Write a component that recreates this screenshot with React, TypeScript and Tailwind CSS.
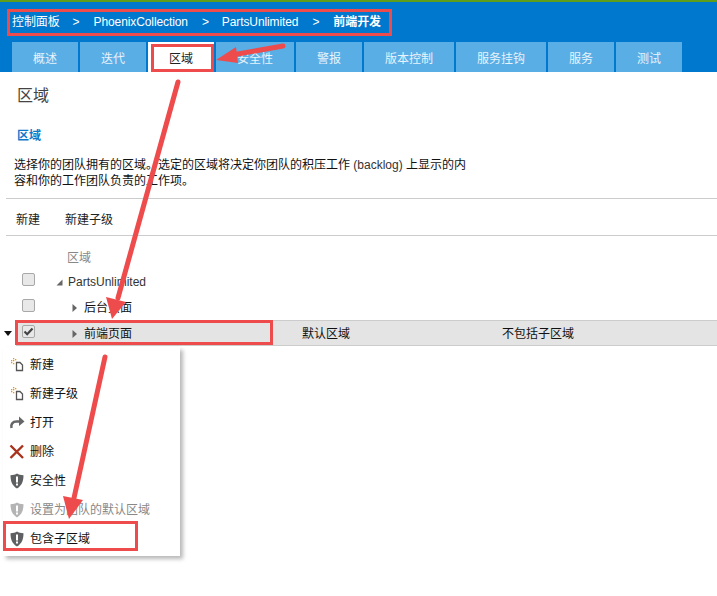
import React from "react";

const cjk = "font-['Liberation_Sans','Noto_Sans_CJK_SC',sans-serif]";

const tabs = [
  { label: "概述", w: "w-[66px]" },
  { label: "迭代", w: "w-[66px]" },
  { label: "区域", w: "w-[66px]", active: true },
  { label: "安全性", w: "w-[78px]" },
  { label: "警报", w: "w-[66px]" },
  { label: "版本控制", w: "w-[90px]" },
  { label: "服务挂钩", w: "w-[90px]" },
  { label: "服务", w: "w-[66px]" },
  { label: "测试", w: "w-[66px]" },
];

const NewIcon = () => (
  <svg width="16" height="16" viewBox="0 0 16 16" fill="none">
    <path d="M7.500 5.500h3.500l2.500 2.500v5.500h-6z" stroke="#555" strokeWidth="1.300" />
    <g fill="#e0962a">
      <rect x="2" y="3" width="1.300" height="1.300" />
      <rect x="4" y="1" width="1.300" height="1.300" />
      <rect x="4" y="3" width="1.300" height="1.300" />
      <rect x="6" y="2" width="1.300" height="1.300" />
      <rect x="2" y="5" width="1.300" height="1.300" />
      <rect x="4" y="6" width="1.300" height="1.300" />
    </g>
  </svg>
);

const OpenIcon = () => (
  <svg width="16" height="16" viewBox="0 0 16 16" fill="none">
    <path d="M2.500 13c-1-3.500 1-6.500 5-6.500h3.500" stroke="#666" strokeWidth="2.600" />
    <path d="M10 1.500l5.500 5-5.500 4.500z" fill="#666" />
  </svg>
);

const DeleteIcon = () => (
  <svg width="16" height="16" viewBox="0 0 16 16">
    <path d="M1.500 1.500l12.500 12.500M14 1.500L1.500 14" stroke="#a8321c" strokeWidth="2.400" fill="none" />
  </svg>
);

const ShieldIcon = ({ color = "#5f6062" }: { color?: string }) => (
  <svg width="16" height="16" viewBox="0 0 16 16">
    <path d="M8 0.500c1.700 1.100 3.700 1.700 6.500 1.700 0 6.300-1.800 10.300-6.500 13.300C3.300 12.500 1.500 8.500 1.500 2.200 4.300 2.200 6.300 1.600 8 0.500z" fill={color} />
    <rect x="7" y="3.500" width="2" height="6" fill="#fff" />
    <rect x="7" y="10.500" width="2" height="2" fill="#fff" />
  </svg>
);

const menuItems = [
  { label: "新建", icon: <NewIcon /> },
  { label: "新建子级", icon: <NewIcon /> },
  { label: "打开", icon: <OpenIcon /> },
  { label: "删除", icon: <DeleteIcon /> },
  { label: "安全性", icon: <ShieldIcon /> },
  { label: "设置为团队的默认区域", icon: <ShieldIcon color="#b4b4b4" />, disabled: true },
  { label: "包含子区域", icon: <ShieldIcon /> },
];

const Checkbox = ({ checked }: { checked?: boolean }) => (
  <span className="mb-[5px] flex h-[13px] w-[13px] items-center justify-center rounded-[2px] border border-[#a8a8a8] bg-[#e8e8e8]">
    {checked && (
      <svg width="11" height="11" viewBox="0 0 11 11">
        <path d="M1.500 5.500l2.700 2.700L9.500 2.500" stroke="#444" strokeWidth="2.200" fill="none" />
      </svg>
    )}
  </span>
);

const Caret = () => (
  <svg className="block" width="6" height="10" viewBox="0 0 6 10">
    <path d="M0.500 1l4.500 4-4.500 4z" fill="#666" />
  </svg>
);

const Arrow = ({ d, head }: { d: string; head: string }) => (
  <g>
    <path d={d} stroke="#ee4c4c" strokeWidth="5" strokeLinecap="round" fill="none" />
    <polygon points={head} fill="#ee4c4c" />
  </g>
);

export default function App() {
  return (
    <div className={`relative h-[596px] w-[717px] overflow-hidden bg-white text-[12px] text-black ${cjk}`}>
      <div className="h-[2px] bg-[#5f9e1a]" />

      {/* header + tabs */}
      <div className="h-[70px] bg-[#0078cd]">
        <div className="flex h-[40px] items-center pl-[12px] tracking-[-0.1px] text-white">
          <span>控制面板</span>
          <span className="ml-[13px] mr-[14px]">&gt;</span>
          <span>PhoenixCollection</span>
          <span className="ml-[14px] mr-[13px]">&gt;</span>
          <span>PartsUnlimited</span>
          <span className="ml-[14px] mr-[14px]">&gt;</span>
          <span className="font-bold">前端开发</span>
        </div>
        <div className="ml-[12px] flex h-[30px] gap-[2px]">
          {tabs.map((t) => (
            <div
              key={t.label}
              className={`flex h-[30px] items-center justify-center pt-[4px] ${t.w} ${
                t.active ? "bg-white text-[#222]" : "bg-[#5aaee6] text-[#e8f3fb]"
              }`}
            >
              {t.label}
            </div>
          ))}
        </div>
      </div>

      {/* page title */}
      <div className="pl-[17px] pt-[12px] text-[16px] leading-[24px] text-[#444]">区域</div>
      <div className="pl-[17px] pt-[19px] text-[12px] font-bold leading-[18px] text-[#0f79c9]">区域</div>
      <div className="pl-[14px] pt-[12px] text-[12px] leading-[16px] text-[#111]">
        <div>
          选择你的团队拥有的区域。选定的区域将决定你团队的积压工作 <span className="text-[#333]">(backlog)</span> 上显示的内
        </div>
        <div>容和你的工作团队负责的工作项。</div>
      </div>

      {/* toolbar */}
      <div className="ml-[6px] mt-[9px] flex h-[38px] items-center gap-[25px] border-y border-[#cccccc] pl-[10px] pt-[6px] text-[#222]">
        <span>新建</span>
        <span>新建子级</span>
      </div>

      {/* tree */}
      <div className="pl-[67px] pt-[13px] leading-[18px] text-[#888]">区域</div>
      <div className="flex h-[24px] items-center pl-[22px] pt-[6px]">
        <Checkbox />
        <svg className="ml-[21px]" width="7" height="7" viewBox="0 0 7 7">
          <path d="M6.500 0.500v6h-6z" fill="#666" />
        </svg>
        <span className="ml-[5px] text-[#333]">PartsUnlimited</span>
      </div>
      <div className="flex h-[28px] items-center pl-[22px] pt-[6px]">
        <Checkbox />
        <span className="ml-[37px]">
          <Caret />
        </span>
        <span className="ml-[6px] text-[#111]">后台页面</span>
      </div>
      <div className="ml-[16px] mt-[1px] flex h-[26px] items-center border-y border-[#cccccc] bg-[#e4e4e4] pl-[6px] pt-[1px]">
        <Checkbox checked />
        <span className="ml-[37px]">
          <Caret />
        </span>
        <span className="ml-[6px] w-[218px] text-[#111]">前端页面</span>
        <span className="w-[200px] text-[#111]">默认区域</span>
        <span className="text-[#111]">不包括子区域</span>
      </div>

      {/* row menu arrow */}
      <svg className="absolute left-[4px] top-[331px]" width="8" height="5" viewBox="0 0 8 5">
        <path d="M0 0h8L4 5z" fill="#111" />
      </svg>

      {/* context menu */}
      <div className="absolute left-[3px] top-[347px] w-[177px] bg-white py-[3px] shadow-[3px_3px_4px_rgba(0,0,0,0.28)]">
        {menuItems.map((item) => (
          <div
            key={item.label}
            className={`flex h-[29px] items-center gap-[5px] pl-[6px] ${item.disabled ? "text-[#888]" : "text-[#111]"}`}
          >
            {item.icon}
            <span>{item.label}</span>
          </div>
        ))}
      </div>

      {/* annotations */}
      <div className="absolute left-[7px] top-[9px] h-[27px] w-[385px] border-[3px] border-[#ee4c4c]" />
      <div className="absolute left-[151px] top-[44px] h-[28px] w-[63px] border-[3px] border-[#ee4c4c]" />
      <div className="absolute left-[15px] top-[320px] h-[25px] w-[258px] border-[3px] border-[#ee4c4c]" />
      <div className="absolute left-[3px] top-[521px] h-[30px] w-[135px] border-[3px] border-[#ee4c4c]" />
      <svg className="absolute left-0 top-0" width="717" height="596" viewBox="0 0 717 596">
        <Arrow d="M283 46L232 55" head="216,60 236,47 238,63" />
        <Arrow d="M178 82L118 298" head="112,319 106,297 126,302" />
        <Arrow d="M105 357L74 498" head="69,519 63,496 83,500" />
      </svg>
    </div>
  );
}
